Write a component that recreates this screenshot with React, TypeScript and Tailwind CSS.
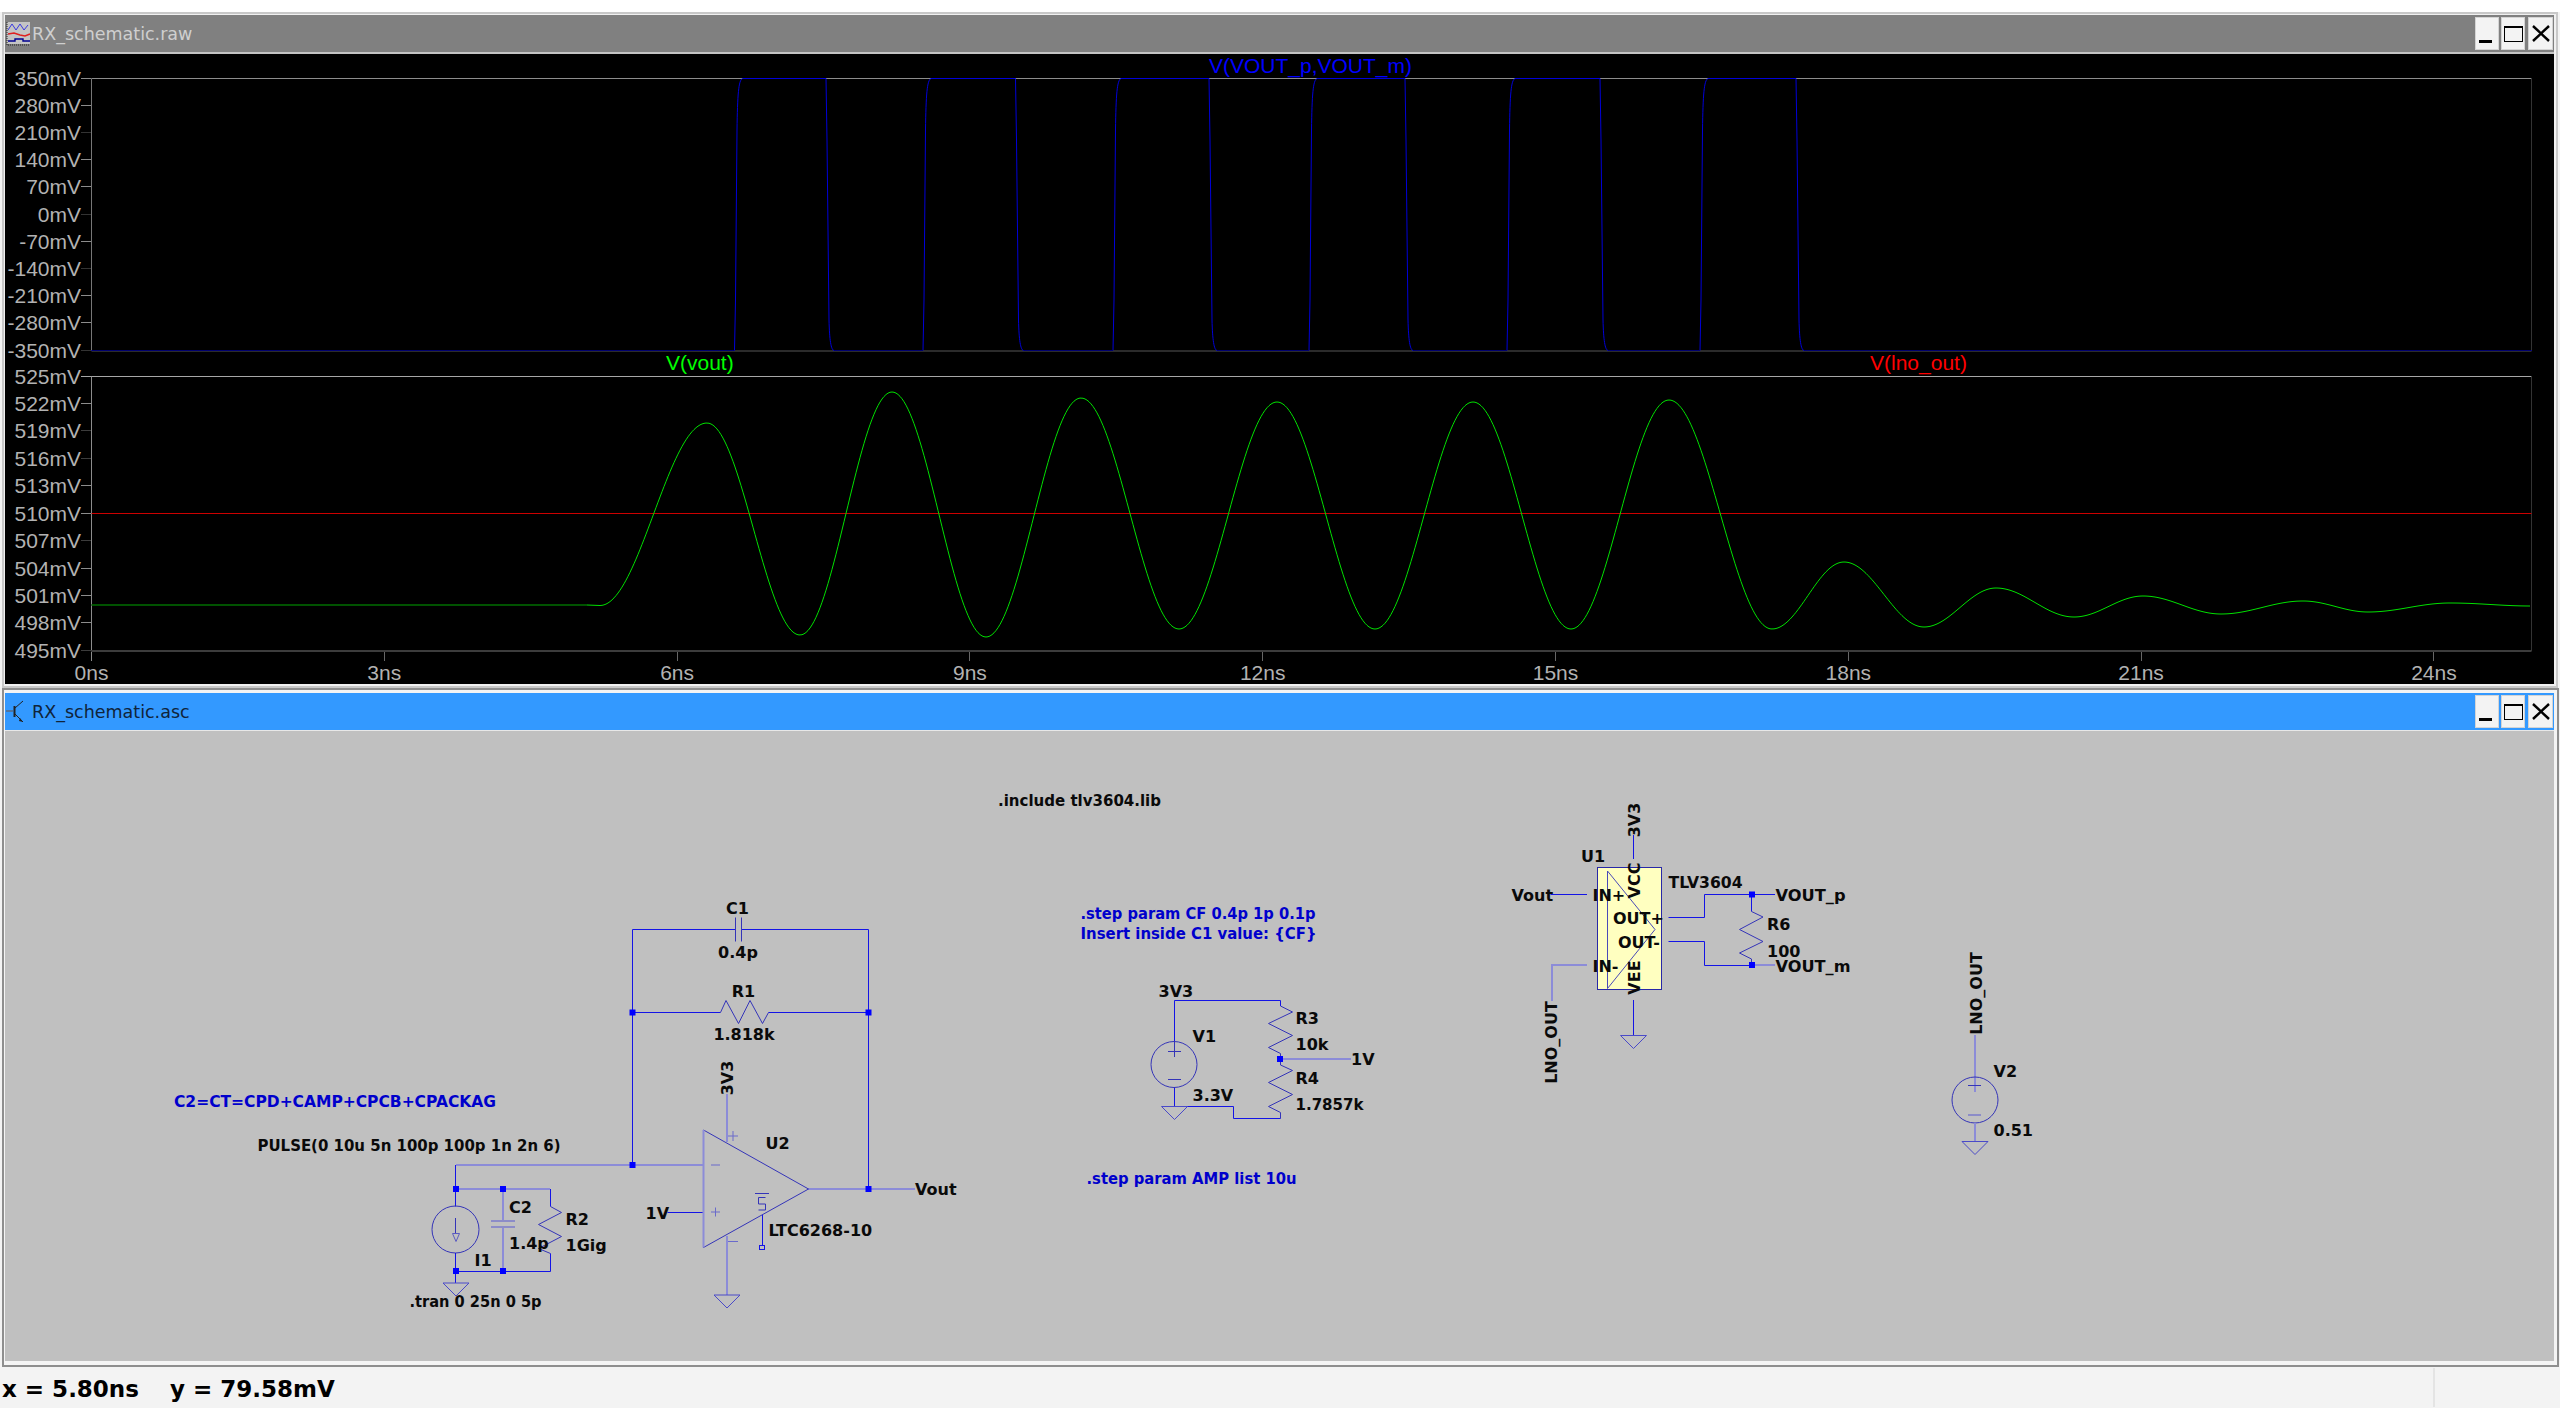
import React from 'react';

const yTop = ['350mV', '280mV', '210mV', '140mV', '70mV', '0mV', '-70mV', '-140mV', '-210mV', '-280mV', '-350mV'];
const yBot = ['525mV', '522mV', '519mV', '516mV', '513mV', '510mV', '507mV', '504mV', '501mV', '498mV', '495mV'];
const dimTop = [2, 5, 7, 10];
const dimBot = [2, 3, 6, 10];

const PLOT_L = 91.5;
const PLOT_R = 2531.5;

// rise and fall positions of the comparator output
const rises = [734.5, 923, 1113, 1309, 1507, 1700];
const falls = [826, 1015.5, 1209, 1405, 1600, 1796];

function pulsePath() {
  let d = `M${PLOT_L} 350.5`;
  rises.forEach((r, i) => {
    const f = falls[i];
    d += ` L${r} 350.5 L${r + 1} 300 L${r + 2.5} 130 C${r + 3} 95 ${r + 4} 80 ${r + 8} 78.5`;
    d += ` L${f} 78.5 L${f + 1} 140 L${f + 3} 320 C${f + 3.5} 340 ${f + 5} 350 ${f + 8} 350.5`;
  });
  return d + ` L${PLOT_R} 350.5`;
}

// the low level reads much darker than the high level in the viewer
function lowPath() {
  let d = `M${PLOT_L} 350.5 H${rises[0]}`;
  falls.forEach((f, i) => {
    d += ` M${f + 8} 350.5 H${i < rises.length - 1 ? rises[i + 1] : PLOT_R}`;
  });
  return d;
}

const extrema: [number, number][] = [
  [600, 605.5], [707, 423], [800, 635], [892, 392], [986, 637], [1081, 398], [1179, 629], [1277, 402],
  [1375, 629], [1473, 402], [1571, 629], [1669, 400], [1772, 629], [1844, 562], [1924, 627], [1996, 588],
  [2074, 617], [2143, 596], [2221, 614], [2303, 601], [2368, 612], [2450, 603], [2531, 606],
];

function wavePath() {
  let d = 'M587 605 L600 605.5';
  for (let i = 0; i < extrema.length - 1; i++) {
    const [x0, y0] = extrema[i];
    const [x1, y1] = extrema[i + 1];
    for (let x = x0 + 2; x <= x1; x += 2) {
      const t = (x - x0) / (x1 - x0);
      const y = y0 + ((1 - Math.cos(Math.PI * t)) / 2) * (y1 - y0);
      d += ` L${x} ${y.toFixed(2)}`;
    }
  }
  return d;
}

function WinButtons() {
  return (
    <div className="flex items-center gap-[2px]">
      <div className="w-[24px] h-[33px] bg-[#f3f3f3] border border-[#d4d4d4] relative">
        <div className="absolute left-[3px] top-[22px] w-[13px] h-[3px] bg-black" />
      </div>
      <div className="w-[24px] h-[33px] bg-[#f3f3f3] border border-[#d4d4d4] flex items-center justify-center">
        <div className="w-[19px] h-[16px] border border-black border-t-[2px]" />
      </div>
      <div className="w-[25px] h-[33px] ml-[1px] bg-[#f3f3f3] border border-[#d4d4d4] flex items-center justify-center">
        <svg width="18" height="17" viewBox="0 0 18 17">
          <path d="M1 1 L17 16 M17 1 L1 16" stroke="#000" strokeWidth="2.4" fill="none" />
        </svg>
      </div>
    </div>
  );
}

function PlotIcon() {
  return (
    <svg width="25" height="24" viewBox="0 0 25 24" className="shrink-0">
      <rect x="1" y="0" width="23" height="22" fill="#c4c4c4" />
      <path d="M1 0 V23 H24" stroke="#222" strokeDasharray="1 1" fill="none" />
      <path d="M2 8 L6 2 L10 8 L14 2 L18 8 L22 3" stroke="#3a3ae0" fill="none" />
      <path d="M2 12 L8 11 L14 13 L19 14 L24 12" stroke="#e02020" strokeWidth="1.4" fill="none" />
      <path d="M2 19 H9 V17 H17 V19 H24" stroke="#000090" strokeWidth="1.4" fill="none" />
    </svg>
  );
}

function SchemIcon() {
  return (
    <svg width="25" height="24" viewBox="0 0 25 24" className="shrink-0">
      <path d="M0 11 H7" stroke="#5a6a80" strokeWidth="1.5" fill="none" />
      <path d="M8.5 6 V17" stroke="#222" strokeWidth="2" fill="none" />
      <path d="M9 8 L17 1 M9 14 L17 22" stroke="#222" strokeWidth="1" fill="none" />
      <path d="M14 18 L17 22 L13 21 Z" fill="#222" />
    </svg>
  );
}

function Plot() {
  return (
    <svg viewBox="5 54 2549 630" className="block w-[2549px] h-[630px] bg-black">
      <g className="font-['Liberation_Sans'] text-[21px] fill-[#b2b2b2]" textAnchor="end">
        {yTop.map((t, i) => (
          <text key={t} x="81" y={78.5 + i * 27.2 + 7}>{t}</text>
        ))}
        {yBot.map((t, i) => (
          <text key={t} x="81" y={376.5 + i * 27.43 + 7}>{t}</text>
        ))}
      </g>
      <g className="font-['Liberation_Sans'] text-[21px] fill-[#b2b2b2]" textAnchor="middle">
        {[0, 3, 6, 9, 12, 15, 18, 21, 24].map((n) => (
          <text key={n} x={91.5 + n * 97.6} y="679.5">{n}ns</text>
        ))}
      </g>

      {/* top pane */}
      {yTop.map((t, i) => (
        <line key={t} x1="81" x2="91" y1={Math.floor(78 + i * 27.2) + 0.5} y2={Math.floor(78 + i * 27.2) + 0.5} stroke={dimTop.includes(i) ? '#333' : '#8c8c8c'} />
      ))}
      <path d="M91.5 78.5 H2531.5" stroke="#8c8c8c" fill="none" />
      <path d="M91.5 78.5 V351" stroke="#777" fill="none" />
      <path d="M2531.5 78.5 V351" stroke="#333" fill="none" />
      <path d="M91.5 351 H2531.5" stroke="#3a3a3a" strokeWidth="1.5" fill="none" />
      <path d={pulsePath()} stroke="#0000d8" strokeWidth="1" fill="none" />
      <path d={lowPath()} stroke="#00006e" strokeWidth="1" fill="none" />

      {/* bottom pane */}
      {yBot.map((t, i) => (
        <line key={t} x1="81" x2="91" y1={Math.floor(376 + i * 27.43) + 0.5} y2={Math.floor(376 + i * 27.43) + 0.5} stroke={dimBot.includes(i) ? '#3c3c3c' : '#8c8c8c'} />
      ))}
      <path d="M81 376.5 H2531.5" stroke="#a6a6a6" fill="none" />
      <path d="M91.5 376.5 V661" stroke="#8c8c8c" fill="none" />
      <path d="M2531.5 376.5 V651" stroke="#333" fill="none" />
      <path d="M91 651 H2531.5" stroke="#3c3c3c" strokeWidth="2" fill="none" />
      {[3, 6, 9, 12, 15, 18, 21, 24].map((n) => (
        <line key={n} x1={Math.round(91 + n * 97.6) + 0.5} x2={Math.round(91 + n * 97.6) + 0.5} y1="652" y2="661" stroke="#666" />
      ))}
      <path d="M91.5 513.5 H2531.5" stroke="#cc0000" fill="none" />
      <path d="M91.5 605 H587" stroke="#005200" strokeWidth="2" fill="none" />
      <path d={wavePath()} stroke="#00e000" strokeWidth="1" fill="none" />

      <g className="font-['Liberation_Sans'] text-[21px]">
        <text x="1209" y="72.5" fill="#0000ff">V(VOUT_p,VOUT_m)</text>
        <text x="666" y="370" fill="#00ff00">V(vout)</text>
        <text x="1870" y="370" fill="#ff0000">V(lno_out)</text>
      </g>
    </svg>
  );
}

// orthogonal wire on a pixel centre
function W({ p }: { p: string }) {
  return <polyline points={p} fill="none" stroke="#1414e6" strokeWidth="1" />;
}

// wire that lands between two pixels in the scaled screenshot
function L({ p }: { p: string }) {
  return <polyline points={p} fill="none" stroke="#8c8cd8" strokeWidth="2" />;
}

// thin symbol outline
function S({ p }: { p: string }) {
  return <polyline points={p} fill="none" stroke="#3434b8" strokeWidth="1" />;
}

function Dot({ x, y }: { x: number; y: number }) {
  return <rect x={x - 3} y={y - 3} width="6" height="6" fill="#0000ff" />;
}

function Gnd({ x, y }: { x: number; y: number }) {
  return <polygon points={`${x - 13},${y} ${x + 13},${y} ${x},${y + 13}`} fill="none" stroke="#4a4ac8" strokeWidth="1" />;
}

function V({ x, y, children }: { x: number; y: number; children: string }) {
  return (
    <text x={x} y={y} textAnchor="middle" transform={`rotate(-90 ${x} ${y})`}>
      {children}
    </text>
  );
}

function Schematic() {
  return (
    <svg viewBox="5 731 2549 630" className="block w-[2549px] h-[630px] bg-[#c0c0c0]">
      {/* transimpedance amp */}
      <W p="632.5,1165 632.5,929.5 735.5,929.5" />
      <W p="741.5,929.5 868.5,929.5 868.5,1189" />
      <S p="735.5,917.5 735.5,941.5" />
      <S p="741.5,917.5 741.5,941.5" />
      <W p="632.5,1012.5 720.5,1012.5" />
      <S p="720.5,1012.5 726,1000.5 738.5,1023.5 750,1000.5 762.5,1023.5 768.5,1012.5" />
      <W p="768.5,1012.5 868.5,1012.5" />
      <L p="456,1165 703,1165" />
      <L p="808,1189 915,1189" />
      <W p="667.5,1212.5 703,1212.5" />
      <L p="727,1094 727,1142" />
      <L p="727,1236 727,1295" />
      <S p="703.5,1130 808.5,1189 703.5,1247.5 703.5,1130" />
      <L p="703.5,1130 703.5,1247.5" />
      <path d="M728 1136 H738 M733 1131 V1141 M711 1165 H720 M711 1212 H720 M715.5 1207.5 V1216.5 M728 1241.5 H738" stroke="#6a6acb" fill="none" />
      <S p="755,1193.5 769,1193.5" />
      <S p="765.5,1197.5 758.5,1197.5 758.5,1204 765.5,1204 765.5,1210 758.5,1210" />
      <W p="762.5,1215 762.5,1245" />
      <rect x="759.5" y="1245.5" width="5" height="4" fill="none" stroke="#1414e6" />
      <Gnd x={727} y={1295} />

      {/* photodiode model */}
      <W p="455.5,1165 455.5,1206.5" />
      <L p="456,1189 550,1189" />
      <W p="550.5,1189 550.5,1206.5" />
      <S p="550.5,1206.5 561.5,1212.5 538.5,1224.5 561.5,1236.5 538.5,1248.5 550.5,1253.5" />
      <W p="550.5,1253.5 550.5,1271.5" />
      <W p="455.5,1271.5 550.5,1271.5" />
      <L p="503,1189 503,1221" />
      <L p="503,1227 503,1271" />
      <path d="M491 1221 H515 M491 1227 H515" stroke="#8c8cc8" strokeWidth="2" fill="none" />
      <circle cx="455.5" cy="1229.5" r="23.5" fill="none" stroke="#3434b8" />
      <W p="455.5,1253 455.5,1283" />
      <S p="455.5,1218 455.5,1233" />
      <polygon points="452.5,1233.5 459.5,1233.5 456,1241.5" fill="none" stroke="#5a5ac0" />
      <Gnd x={456} y={1283} />

      {/* reference divider */}
      <W p="1174.5,1041 1174.5,1000.5 1280.5,1000.5 1280.5,1006" />
      <S p="1280.5,1006 1292.5,1012 1268.5,1023.5 1292.5,1035.5 1268.5,1047.5 1280.5,1053.5 1280.5,1059" />
      <L p="1280,1059 1351,1059" />
      <S p="1280.5,1059 1280.5,1065 1292.5,1070.5 1268.5,1082.5 1292.5,1094.5 1268.5,1106.5 1280.5,1112.5 1280.5,1118.5" />
      <W p="1280.5,1118.5 1233.5,1118.5 1233.5,1106.5 1174.5,1106.5" />
      <W p="1174.5,1087 1174.5,1107" />
      <circle cx="1174" cy="1064.5" r="23" fill="none" stroke="#3434b8" />
      <path d="M1168 1051.5 H1181 M1174.5 1041 V1057 M1168 1079.5 H1181" stroke="#3434b8" fill="none" />
      <Gnd x={1174.5} y={1106.5} />

      {/* comparator */}
      <rect x="1597.5" y="867.5" width="64" height="122" fill="#ffffc0" stroke="#2828a8" />
      <polygon points="1607.5,871 1655,929.5 1607.5,988.5" fill="none" stroke="#4a4ab8" />
      <W p="1633.5,835 1633.5,859" />
      <W p="1550.5,894.5 1587,894.5" />
      <L p="1587,965 1552,965 1552,1001" />
      <W p="1668.5,917.5 1704.5,917.5 1704.5,894.5 1775,894.5" />
      <W p="1668.5,941.5 1704.5,941.5 1704.5,965.5 1752,965.5" />
      <L p="1752,965 1775,965" />
      <W p="1751.5,894.5 1751.5,911.5" />
      <S p="1751.5,911.5 1763,917 1739.5,929.5 1763,941.5 1739.5,953 1751.5,959 1751.5,965" />
      <W p="1633.5,1000 1633.5,1036" />
      <Gnd x={1633.5} y={1035.5} />

      {/* threshold source */}
      <L p="1975,1035 1975,1092" />
      <circle cx="1975" cy="1100" r="23" fill="none" stroke="#3434b8" />
      <path d="M1968 1085.5 H1981" stroke="#3434b8" fill="none" />
      <path d="M1968 1115 H1981" stroke="#8c8cc8" strokeWidth="2" fill="none" />
      <L p="1975,1123 1975,1141" />
      <Gnd x={1975} y={1141.5} />

      <Dot x={632.5} y={1012.5} />
      <Dot x={868.5} y={1012.5} />
      <Dot x={632.5} y={1165} />
      <Dot x={868.5} y={1189} />
      <Dot x={456} y={1189} />
      <Dot x={503} y={1189} />
      <Dot x={456} y={1271} />
      <Dot x={503} y={1271} />
      <Dot x={1280} y={1059} />
      <Dot x={1752} y={894.5} />
      <Dot x={1752} y={965} />

      <g className="font-['DejaVu_Sans'] font-bold text-[16px] fill-[#0000cc]">
        <text x="174" y="1106.5" textLength="322" lengthAdjust="spacingAndGlyphs">C2=CT=CPD+CAMP+CPCB+CPACKAG</text>
        <text x="1080.5" y="918.5" textLength="235" lengthAdjust="spacingAndGlyphs">.step param CF 0.4p 1p 0.1p</text>
        <text x="1080.5" y="938.5" textLength="236" lengthAdjust="spacingAndGlyphs">Insert inside C1 value: {'{CF}'}</text>
        <text x="1086.5" y="1183.5" textLength="210" lengthAdjust="spacingAndGlyphs">.step param AMP list 10u</text>
      </g>
      <g className="font-['DejaVu_Sans'] font-bold text-[16px] fill-[#0a0a0a]">
        <text x="998" y="806" textLength="163" lengthAdjust="spacingAndGlyphs">.include tlv3604.lib</text>
        <text x="257.5" y="1150.5" textLength="303" lengthAdjust="spacingAndGlyphs">PULSE(0 10u 5n 100p 100p 1n 2n 6)</text>
        <text x="509" y="1212.5">C2</text>
        <text x="509" y="1248.5">1.4p</text>
        <text x="565.5" y="1224.5">R2</text>
        <text x="565.5" y="1250.5">1Gig</text>
        <text x="474.5" y="1265.5">I1</text>
        <text x="409.5" y="1306.5" textLength="132" lengthAdjust="spacingAndGlyphs">.tran 0 25n 0 5p</text>
        <text x="737.5" y="913.5" textAnchor="middle">C1</text>
        <text x="738" y="957.5" textAnchor="middle">0.4p</text>
        <text x="743.5" y="996.5" textAnchor="middle">R1</text>
        <text x="744" y="1040" textAnchor="middle">1.818k</text>
        <V x={733} y={1078}>3V3</V>
        <text x="765.5" y="1148.5">U2</text>
        <text x="915" y="1195">Vout</text>
        <text x="645.5" y="1218.5">1V</text>
        <text x="768.5" y="1235.5">LTC6268-10</text>
        <text x="1158.5" y="996.5">3V3</text>
        <text x="1192.5" y="1041.5">V1</text>
        <text x="1192.5" y="1100.5">3.3V</text>
        <text x="1295.5" y="1023.5">R3</text>
        <text x="1295.5" y="1050">10k</text>
        <text x="1295.5" y="1083.5">R4</text>
        <text x="1295.5" y="1109.5" textLength="68" lengthAdjust="spacingAndGlyphs">1.7857k</text>
        <text x="1351" y="1064.5">1V</text>
        <text x="1581" y="861.5">U1</text>
        <V x={1639.5} y={820}>3V3</V>
        <V x={1639.5} y={880.5}>VCC</V>
        <V x={1639.5} y={977.5}>VEE</V>
        <text x="1668.5" y="887.5" textLength="74" lengthAdjust="spacingAndGlyphs">TLV3604</text>
        <text x="1511.5" y="900.5">Vout</text>
        <text x="1592.5" y="900.5">IN+</text>
        <text x="1613" y="924">OUT+</text>
        <text x="1618" y="948">OUT-</text>
        <text x="1592.5" y="971.5">IN-</text>
        <text x="1775.5" y="900.5" textLength="70" lengthAdjust="spacingAndGlyphs">VOUT_p</text>
        <text x="1775.5" y="971.5" textLength="75" lengthAdjust="spacingAndGlyphs">VOUT_m</text>
        <text x="1767" y="930">R6</text>
        <text x="1767" y="956.5">100</text>
        <V x={1557} y={1042.5}>LNO_OUT</V>
        <V x={1981.5} y={993.5}>LNO_OUT</V>
        <text x="1993.5" y="1076.5">V2</text>
        <text x="1993.5" y="1135.5">0.51</text>
      </g>
    </svg>
  );
}

export default function App() {
  return (
    <div className="w-[2560px] h-[1408px] bg-[#f3f3f3] flex flex-col overflow-hidden font-['DejaVu_Sans',sans-serif]">
      <div className="h-[12px] bg-white shrink-0" />

      {/* waveform viewer, not focused */}
      <div className="ml-[2px] w-[2556px] border-2 border-[#c8c8c8] bg-[#f0f0f0] pt-[1px] pb-[2px] pl-[1px] pr-[2px] shrink-0">
        <div className="h-[37px] bg-[#808080] flex items-center pl-[1px] pr-[1px]">
          <PlotIcon />
          <span className="ml-[1px] mt-[2px] text-[17.5px] leading-none text-[#cfcfcf]">RX_schematic.raw</span>
          <div className="ml-auto">
            <WinButtons />
          </div>
        </div>
        <div className="h-[2px] bg-[#c4c4c4]" />
        <Plot />
      </div>

      {/* schematic editor, focused */}
      <div className="ml-[2px] w-[2557px] border-x-2 border-b-2 border-t-2 border-[#8e8e8e] bg-[#f4f4f4] pt-[3px] pb-[4px] pl-[1px] pr-[3px] shrink-0">
        <div className="h-[37px] bg-[#3399ff] flex items-center pl-[1px] pr-[1px]">
          <SchemIcon />
          <span className="ml-[1px] mt-[2px] text-[17.5px] leading-none text-[#10243a]">RX_schematic.asc</span>
          <div className="ml-auto">
            <WinButtons />
          </div>
        </div>
        <div className="h-px bg-[#e8e8e8]" />
        <Schematic />
      </div>

      {/* status bar */}
      <div className="flex-1 flex items-stretch">
        <div className="w-[2433px] flex items-center pl-[2px] pt-[3px] font-bold text-[23px] text-black whitespace-pre">
          <span>x = 5.80ns</span>
          <span className="ml-[31px]">y = 79.58mV</span>
        </div>
        <div className="w-[2px] my-[1px] bg-[#e4e4e4]" />
      </div>
    </div>
  );
}
